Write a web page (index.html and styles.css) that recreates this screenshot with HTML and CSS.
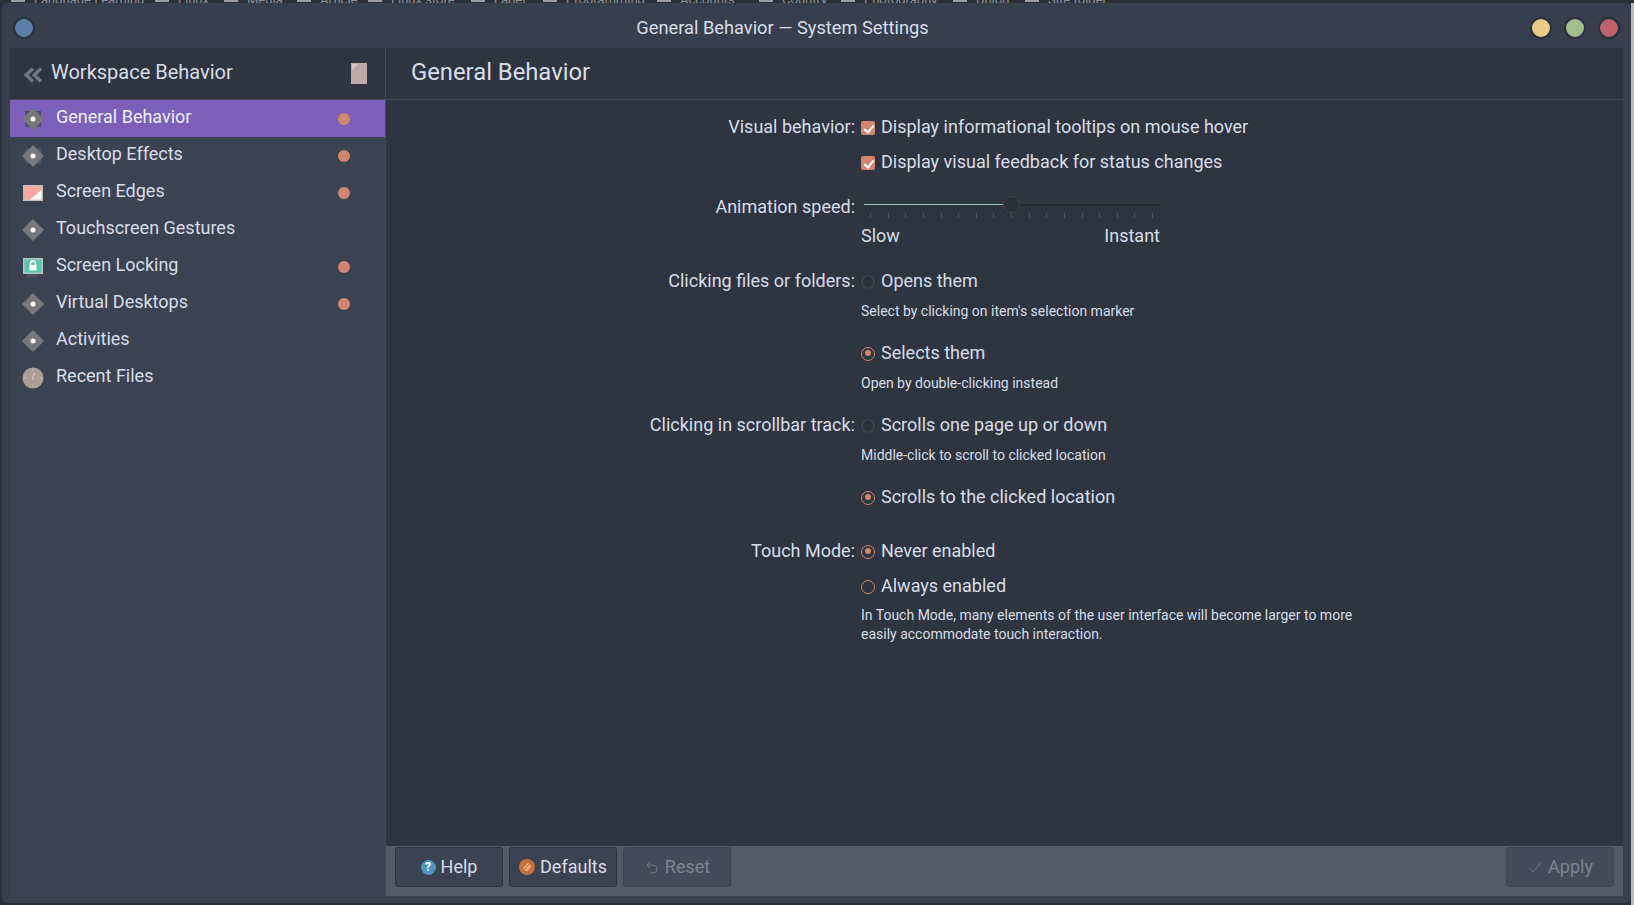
FILE: index.html
```html
<!DOCTYPE html>
<html lang="en">

<head>
  <meta charset="UTF-8">
  <title>General Behavior — System Settings</title>
  <link rel="stylesheet" href="styles.css">
</head>

<body>
  <!-- bookmarks bar of the browser behind the window, only its bottom edge shows -->
  <div class="behind">
    <span class="bookmark b-1">Language Learning</span>
    <span class="bookmark b-2">Linux</span>
    <span class="bookmark b-3">Media</span>
    <span class="bookmark b-4">Article</span>
    <span class="bookmark b-5">Linux store</span>
    <span class="bookmark b-6">Label</span>
    <span class="bookmark b-7">Programming</span>
    <span class="bookmark b-8">Accounts</span>
    <span class="bookmark b-9">Country</span>
    <span class="bookmark b-10">Photography</span>
    <span class="bookmark b-11">Union</span>
    <span class="bookmark b-12">Site folder</span>
  </div>

  <div class="desktop">
    <div class="window">
      <div class="titlebar">
        <span class="wm-btn wm-blue"></span>
        <span class="title">General Behavior — System Settings</span>
        <div class="wm-group">
          <span class="wm-btn wm-yellow"></span>
          <span class="wm-btn wm-green"></span>
          <span class="wm-btn wm-red"></span>
        </div>
      </div>

      <div class="panes">
        <div class="sidebar">
          <div class="side-head">
            <svg class="back" width="20" height="16" viewBox="0 0 20 16">
              <path d="M10 1.500 3.200 8l6.800 6.500M18 1.500 11.200 8l6.800 6.500" fill="none" stroke="#727786" stroke-width="3.400" />
            </svg>
            <span class="side-title">Workspace Behavior</span>
            <svg class="bookmark-icon" width="16" height="21" viewBox="0 0 16 21">
              <rect width="16" height="21" fill="#bdaaa6" />
              <path d="M1 1h6L1 7z" fill="#d5c8c5" />
            </svg>
          </div>

          <div class="item active">
            <svg class="item-icon" width="22" height="22" viewBox="0 0 22 22">
              <rect x="3" y="3" width="16" height="16" fill="#4b4f63" />
              <path d="M11 0 22 11 11 22 0 11z" fill="#77787d" />
              <circle cx="11" cy="11" r="2.500" fill="#fff" />
            </svg>
            <span class="item-name">General Behavior</span>
            <span class="dot"></span>
          </div>
          <div class="item">
            <svg class="item-icon" width="22" height="22" viewBox="0 0 22 22">
              <rect x="3" y="3" width="16" height="16" fill="#4a4f5e" />
              <path d="M11 0 22 11 11 22 0 11z" fill="#77787d" />
              <circle cx="11" cy="11" r="2.500" fill="#fff" />
            </svg>
            <span class="item-name">Desktop Effects</span>
            <span class="dot"></span>
          </div>
          <div class="item">
            <svg class="item-icon" width="22" height="22" viewBox="0 0 22 22">
              <rect x="1" y="3" width="20" height="16" fill="#c9bdbb" />
              <rect x="2.500" y="4.500" width="17" height="13" fill="#f4a79c" />
              <path d="M19.500 8v9.500H8z" fill="#fff" />
            </svg>
            <span class="item-name">Screen Edges</span>
            <span class="dot"></span>
          </div>
          <div class="item">
            <svg class="item-icon" width="22" height="22" viewBox="0 0 22 22">
              <path d="M11 0 22 11 11 22 0 11z" fill="#77787d" />
              <circle cx="11" cy="11" r="2.500" fill="#fff" />
            </svg>
            <span class="item-name">Touchscreen Gestures</span>
          </div>
          <div class="item">
            <svg class="item-icon" width="22" height="22" viewBox="0 0 22 22">
              <rect x="5" y="17" width="12" height="4" fill="#4a4f5e" />
              <rect x="1" y="2" width="20" height="16" fill="#b9c4c4" />
              <rect x="2.500" y="3.500" width="17" height="13" fill="#5cc4b0" />
              <path d="M8.500 9V7.500a2.500 2.500 0 0 1 5 0V9" fill="none" stroke="#fff" stroke-width="1.300" />
              <rect x="7.500" y="9" width="7" height="5.500" fill="#fff" />
            </svg>
            <span class="item-name">Screen Locking</span>
            <span class="dot"></span>
          </div>
          <div class="item">
            <svg class="item-icon" width="22" height="22" viewBox="0 0 22 22">
              <path d="M11 0 22 11 11 22 0 11z" fill="#77787d" />
              <circle cx="11" cy="11" r="2.500" fill="#fff" />
            </svg>
            <span class="item-name">Virtual Desktops</span>
            <span class="dot"></span>
          </div>
          <div class="item">
            <svg class="item-icon" width="22" height="22" viewBox="0 0 22 22">
              <path d="M11 0 22 11 11 22 0 11z" fill="#77787d" />
              <circle cx="11" cy="11" r="2.500" fill="#fff" />
            </svg>
            <span class="item-name">Activities</span>
          </div>
          <div class="item">
            <svg class="item-icon" width="22" height="22" viewBox="0 0 22 22">
              <circle cx="11" cy="11" r="10.500" fill="#ab9e94" />
              <path d="M11 2v2M11 18v2M2 11h2M18 11h2" stroke="#c9bfb7" stroke-width="1" />
              <path d="M12.500 6 10.500 11l1.500 2" fill="none" stroke="#ddd6d0" stroke-width="1" />
            </svg>
            <span class="item-name">Recent Files</span>
          </div>
        </div>

        <div class="content">
          <div class="content-head">General Behavior</div>

          <div class="form">
            <div class="row">
              <span class="key">Visual behavior:</span>
              <div>
                <div class="opt"><span class="check"></span>Display informational tooltips on mouse hover</div>
                <div class="opt"><span class="check"></span>Display visual feedback for status changes</div>
              </div>
            </div>

            <div class="row speed-row">
              <span class="key">Animation speed:</span>
              <div class="slider">
                <div class="track">
                  <div class="track-fill"></div>
                  <span class="handle"></span>
                </div>
                <div class="ticks">
                  <i></i><i></i><i></i><i></i><i></i><i></i><i></i><i></i><i></i>
                  <i></i><i></i><i></i><i></i><i></i><i></i><i></i><i></i>
                </div>
                <div class="slider-labels"><span>Slow</span><span>Instant</span></div>
              </div>
            </div>

            <div class="row files-row">
              <span class="key">Clicking files or folders:</span>
              <div>
                <div class="opt"><span class="radio"></span>Opens them</div>
                <div class="hint">Select by clicking on item's selection marker</div>
                <div class="opt"><span class="radio on"></span>Selects them</div>
                <div class="hint">Open by double-clicking instead</div>
              </div>
            </div>

            <div class="row">
              <span class="key">Clicking in scrollbar track:</span>
              <div>
                <div class="opt"><span class="radio"></span>Scrolls one page up or down</div>
                <div class="hint">Middle-click to scroll to clicked location</div>
                <div class="opt"><span class="radio on"></span>Scrolls to the clicked location</div>
              </div>
            </div>

            <div class="row touch-row">
              <span class="key">Touch Mode:</span>
              <div>
                <div class="opt"><span class="radio on"></span>Never enabled</div>
                <div class="opt"><span class="radio ring"></span>Always enabled</div>
                <div class="hint wide">In Touch Mode, many elements of the user interface will become larger to more easily accommodate touch interaction.</div>
              </div>
            </div>
          </div>

          <div class="footer">
            <button class="btn"><span class="help-icon">?</span>Help</button>
            <button class="btn">
              <svg class="btn-icon" width="16" height="16" viewBox="0 0 16 16">
                <circle cx="8" cy="8" r="8" fill="#c8703a" />
                <path d="M4.500 10 9.500 4M6 11.500l5-6M7.800 12l4-5" fill="none" stroke="#eec9ae" stroke-width="1.100" />
              </svg>
              Defaults
            </button>
            <button class="btn off">
              <svg class="btn-icon" width="16" height="16" viewBox="0 0 16 16">
                <path d="M6 3 3 6l3 3M3 6h6a3.800 3.800 0 0 1 0 8H6" fill="none" stroke="#6f7685" stroke-width="1" />
              </svg>
              Reset
            </button>
            <button class="btn off apply">
              <svg class="btn-icon" width="16" height="16" viewBox="0 0 16 16">
                <path d="M2 9l4 4 8-9" fill="none" stroke="#6f7685" stroke-width="1" />
              </svg>
              Apply
            </button>
          </div>
        </div>
      </div>
    </div>
    <div class="edge"></div>
  </div>
</body>

</html>
```

FILE: styles.css
```css
* {
  box-sizing: border-box;
}

html,
body {
  height: 100%;
}

body {
  margin: 0;
  display: flex;
  flex-direction: column;
  overflow: hidden;
  background-color: #2b2f39;
  color: #d8dee9;
  font-family: Roboto, "Liberation Sans", sans-serif;
  font-size: 18px;
}

/* browser behind the window */
.behind {
  height: 3px;
  flex: none;
  display: flex;
  overflow: hidden;
  background-color: #2b2f39;
}

.bookmark {
  flex: none;
  position: relative;
  height: 3px;
  padding-left: 23px;
  font-size: 13px;
  line-height: 0;
  color: #8f939b;
}

.bookmark::before {
  content: "";
  position: absolute;
  left: 0;
  top: 0;
  width: 14px;
  height: 2px;
  background-color: #9a9da4;
}

.b-1 { margin-left: 11px; width: 144px; }
.b-2 { width: 69px; }
.b-3 { width: 73px; }
.b-4 { width: 71px; }
.b-5 { width: 103px; }
.b-6 { width: 72px; }
.b-7 { width: 114px; }
.b-8 { width: 102px; }
.b-9 { width: 82px; }
.b-10 { width: 112px; }
.b-11 { width: 72px; }
.b-12 { width: 100px; }

.desktop {
  flex: 1;
  display: flex;
  min-height: 0;
  padding-left: 2px;
  padding-bottom: 2px;
}

.edge {
  width: 3px;
  flex: none;
  margin-bottom: -2px;
  background-color: #b9b9b9;
}

.window {
  flex: 1;
  display: flex;
  flex-direction: column;
  min-width: 0;
  padding: 0 8px 7px;
  background-color: #373e4d;
  border-radius: 5px;
}

.titlebar {
  height: 45px;
  flex: none;
  display: flex;
  align-items: center;
  padding-top: 7px;
  padding-bottom: 3px;
}

.title {
  flex: 1;
  text-align: center;
  font-size: 18.250px;
}

.wm-group {
  display: flex;
  gap: 12px;
  margin-right: 3px;
}

.wm-btn {
  width: 22px;
  height: 22px;
  flex: none;
  border: 2px solid #2b303b;
  border-radius: 50%;
  margin-left: 3px;
}

.wm-group .wm-btn {
  margin-left: 0;
}

.wm-blue { background-color: #5e81ac; }
.wm-yellow { background-color: #ebcb8b; }
.wm-green { background-color: #a3be8c; }
.wm-red { background-color: #bf616a; }

.panes {
  flex: 1;
  display: flex;
  min-height: 0;
}

/* left list */
.sidebar {
  width: 376px;
  flex: none;
  background-color: #3b4252;
  border-right: 1px solid #434a5a;
}

.side-head {
  height: 52px;
  display: flex;
  align-items: center;
  padding-left: 13px;
  padding-right: 18px;
  background-color: #2e3440;
  border-bottom: 1px solid #434a5a;
}

.back {
  flex: none;
  margin-top: 2px;
}

.side-title {
  flex: 1;
  margin-left: 8px;
  margin-top: -4px;
  font-size: 20px;
}

.item {
  height: 37px;
  display: flex;
  align-items: center;
  padding-left: 12px;
}

.item.active {
  background-color: #7b5fb8;
  color: #eceff4;
}

.item-icon {
  flex: none;
}

.item-name {
  flex: 1;
  margin-left: 12px;
  margin-top: -4px;
}

.dot {
  width: 12px;
  height: 12px;
  flex: none;
  margin-right: 35px;
  border-radius: 50%;
  background-color: #d08770;
}

/* right pane */
.content {
  flex: 1;
  display: flex;
  flex-direction: column;
  min-width: 0;
  background-color: #2e3440;
}

.content-head {
  height: 52px;
  flex: none;
  display: flex;
  align-items: center;
  padding-left: 25px;
  padding-bottom: 4px;
  font-size: 23.800px;
  border-bottom: 1px solid #434a5a;
}

.form {
  flex: 1;
  padding-top: 9px;
}

.row {
  display: grid;
  grid-template-columns: 469px 1fr;
  column-gap: 6px;
}

.key {
  height: 35px;
  line-height: 35px;
  text-align: right;
}

.opt {
  height: 35px;
  display: flex;
  align-items: center;
  gap: 6px;
}

.check,
.radio {
  width: 14px;
  height: 14px;
  flex: none;
  position: relative;
  margin-top: 2px;
}

.check {
  border-radius: 2px;
  background-color: #d08770;
}

.check::after {
  content: "";
  position: absolute;
  left: 5px;
  top: 2px;
  width: 4px;
  height: 8px;
  border: solid #fff;
  border-width: 0 2px 2px 0;
  transform: rotate(40deg);
}

.radio {
  border: 2px solid #3a404e;
  border-radius: 50%;
  background-color: #2a2f3a;
}

.radio.on,
.radio.ring {
  border: 1.500px solid #d08770;
  background-color: transparent;
}

.radio.on::after {
  content: "";
  position: absolute;
  left: 2.500px;
  top: 2.500px;
  width: 6px;
  height: 6px;
  border-radius: 50%;
  background-color: #d08770;
}

.hint {
  height: 24px;
  padding-top: 2px;
  margin-bottom: 13px;
  font-size: 14px;
  line-height: 22px;
}

.hint.wide {
  width: 500px;
  height: auto;
  padding-top: 0;
  margin-top: 3px;
  margin-bottom: 0;
  line-height: 19px;
}

.speed-row {
  margin-top: 10px;
}

.files-row {
  margin-top: 14px;
}

.touch-row {
  margin-top: 19px;
}

/* slider */
.slider {
  width: 299px;
}

.track {
  height: 2px;
  margin: 15px 0 0 3px;
  position: relative;
  background-color: #262b35;
}

.track-fill {
  width: 141px;
  height: 1px;
  background-color: #8fc9c4;
}

.handle {
  position: absolute;
  left: 139px;
  top: -8px;
  width: 17px;
  height: 17px;
  border: 1px solid #3f4554;
  border-radius: 50%;
  background-color: #2a2f3a;
}

.ticks {
  display: flex;
  justify-content: space-between;
  margin: 7px 7px 0 9px;
}

.ticks i {
  width: 1px;
  height: 5px;
  background-color: #4c5262;
}

.slider-labels {
  display: flex;
  justify-content: space-between;
  margin-top: 4px;
  line-height: 27px;
}

/* bottom buttons */
.footer {
  height: 50px;
  flex: none;
  display: flex;
  gap: 6px;
  padding: 1px 9px 9px;
  background-color: #525967;
}

.btn {
  width: 108px;
  height: 40px;
  display: flex;
  align-items: center;
  justify-content: center;
  gap: 5px;
  padding: 0 0 2px;
  background-color: #3b4252;
  border: 1px solid #2e3440;
  border-radius: 3px;
  color: #d8dee9;
  font-family: inherit;
  font-size: 18px;
}

.btn.off {
  background-color: #444a59;
  border-color: #3b4252;
  color: #7d8494;
}

.btn.apply {
  margin-left: auto;
}

.btn-icon {
  flex: none;
  margin-top: 2px;
}

.help-icon {
  width: 15px;
  height: 15px;
  flex: none;
  margin-top: 2px;
  border-radius: 50%;
  background-color: #4d93bb;
  color: #fff;
  font-size: 12px;
  font-weight: 700;
  line-height: 15px;
  text-align: center;
}
```
